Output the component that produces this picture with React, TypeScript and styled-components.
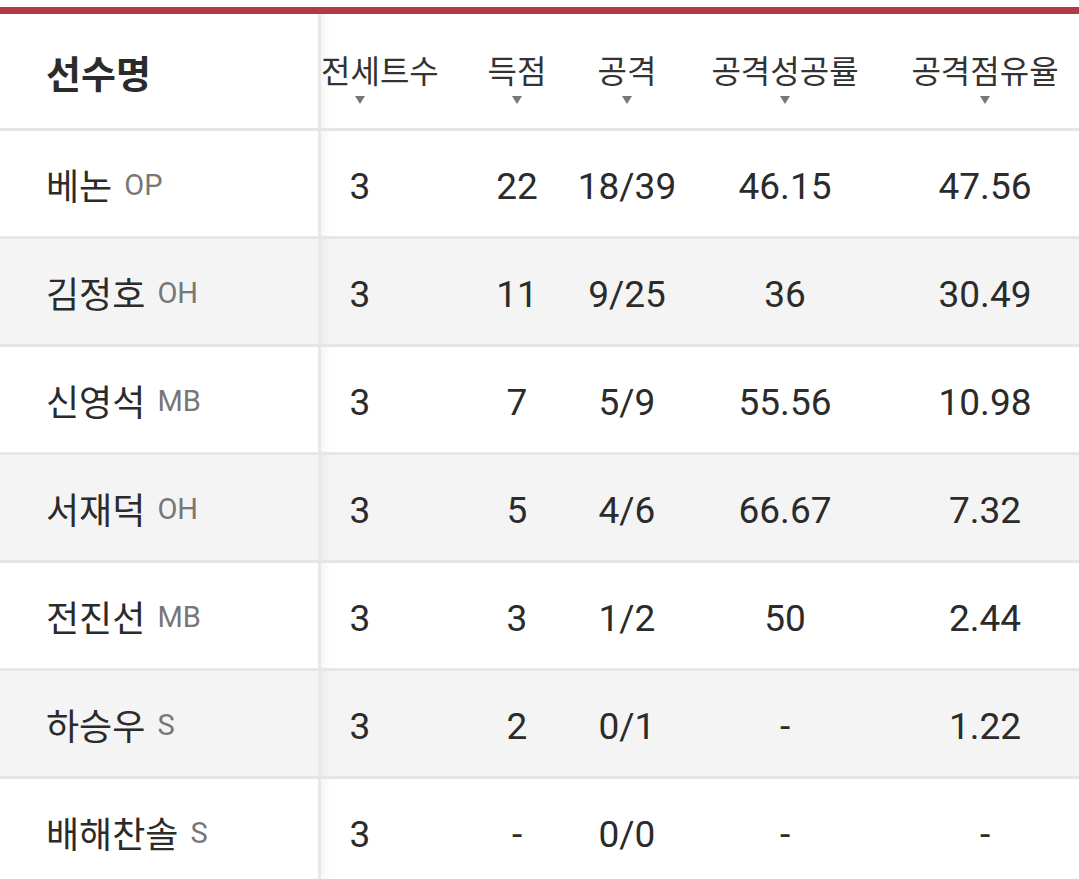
import styled, { createGlobalStyle } from "styled-components";

const Global = createGlobalStyle`
    body {
        margin: 0;
        background: #fff;
        font-family: Roboto, "Noto Sans CJK KR", sans-serif;
        color: #2b2b2b;
    }
`;

const Page = styled.div`
    padding-top: 7px;
    width: 1079px;
    overflow: hidden;
`;

const Table = styled.div`
    border-top: 7px solid #b13a44;
`;

const Grid = styled.div<{ $alt?: boolean }>`
    display: grid;
    grid-template-columns: 321px 78px 176px 104px 212px 1fr;
    background: ${(p) => (p.$alt ? "#f4f4f4" : "#fff")};
    border-bottom: 3px solid #e6e6e6;
`;

const HeaderRow = styled(Grid)`
    height: 114px;
`;

const Row = styled(Grid)`
    height: 105px;
`;

const NameCell = styled.div<{ $head?: boolean }>`
    position: relative;
    display: flex;
    align-items: center;
    padding-left: 46px;
    border-right: 3px solid #e8e8e8;
    font-family: "Noto Sans CJK KR", sans-serif;
    font-size: ${(p) => (p.$head ? "38px" : "36px")};
    font-weight: ${(p) => (p.$head ? 700 : 400)};
    color: #2b2b2b;
    white-space: nowrap;

    &::after {
        content: "";
        position: absolute;
        top: 0;
        bottom: 0;
        right: -13px;
        width: 10px;
        background: linear-gradient(to right, rgba(0, 0, 0, 0.035), rgba(0, 0, 0, 0));
    }
`;

const Pos = styled.span`
    margin-left: 12px;
    padding-top: 2px;
    font-family: Roboto, sans-serif;
    font-size: 29px;
    color: #777;
`;

const HeadCell = styled.div<{ $pad?: number }>`
    padding-top: 37px;
    padding-left: ${(p) => p.$pad ?? 0}px;
    text-align: center;
    white-space: nowrap;
    font-family: "Noto Sans CJK KR", sans-serif;
    font-size: 32px;
    line-height: 36px;
    color: #333;
`;

const SortArrow = styled.div`
    width: 0;
    height: 0;
    margin: 9px auto 0;
    border-left: 5px solid transparent;
    border-right: 5px solid transparent;
    border-top: 8px solid #777;
`;

const Cell = styled.div<{ $pad?: number }>`
    display: flex;
    align-items: center;
    justify-content: center;
    padding-left: ${(p) => p.$pad ?? 0}px;
    padding-top: 6px;
    font-size: 37px;
    color: #2b2b2b;
`;

type Player = {
    name: string;
    pos: string;
    sets: string;
    points: string;
    attack: string;
    rate: string;
    share: string;
};

const players: Player[] = [
    { name: "베논", pos: "OP", sets: "3", points: "22", attack: "18/39", rate: "46.15", share: "47.56" },
    { name: "김정호", pos: "OH", sets: "3", points: "11", attack: "9/25", rate: "36", share: "30.49" },
    { name: "신영석", pos: "MB", sets: "3", points: "7", attack: "5/9", rate: "55.56", share: "10.98" },
    { name: "서재덕", pos: "OH", sets: "3", points: "5", attack: "4/6", rate: "66.67", share: "7.32" },
    { name: "전진선", pos: "MB", sets: "3", points: "3", attack: "1/2", rate: "50", share: "2.44" },
    { name: "하승우", pos: "S", sets: "3", points: "2", attack: "0/1", rate: "-", share: "1.22" },
    { name: "배해찬솔", pos: "S", sets: "3", points: "-", attack: "0/0", rate: "-", share: "-" },
];

const columns = [
    { label: "전세트수", pad: 0 },
    { label: "득점", pad: 60 },
    { label: "공격", pad: 0 },
    { label: "공격성공률", pad: 0 },
    { label: "공격점유율", pad: 0 },
];

export default function App() {
    return (
        <Page>
            <Global />
            <Table>
                <HeaderRow>
                    <NameCell $head>선수명</NameCell>
                    {columns.map((c) => (
                        <HeadCell key={c.label} $pad={c.pad}>
                            {c.label}
                            <SortArrow />
                        </HeadCell>
                    ))}
                </HeaderRow>
                {players.map((p, i) => (
                    <Row key={p.name} $alt={i % 2 === 1}>
                        <NameCell>
                            {p.name}
                            <Pos>{p.pos}</Pos>
                        </NameCell>
                        <Cell>{p.sets}</Cell>
                        <Cell $pad={60}>{p.points}</Cell>
                        <Cell>{p.attack}</Cell>
                        <Cell>{p.rate}</Cell>
                        <Cell>{p.share}</Cell>
                    </Row>
                ))}
            </Table>
        </Page>
    );
}
